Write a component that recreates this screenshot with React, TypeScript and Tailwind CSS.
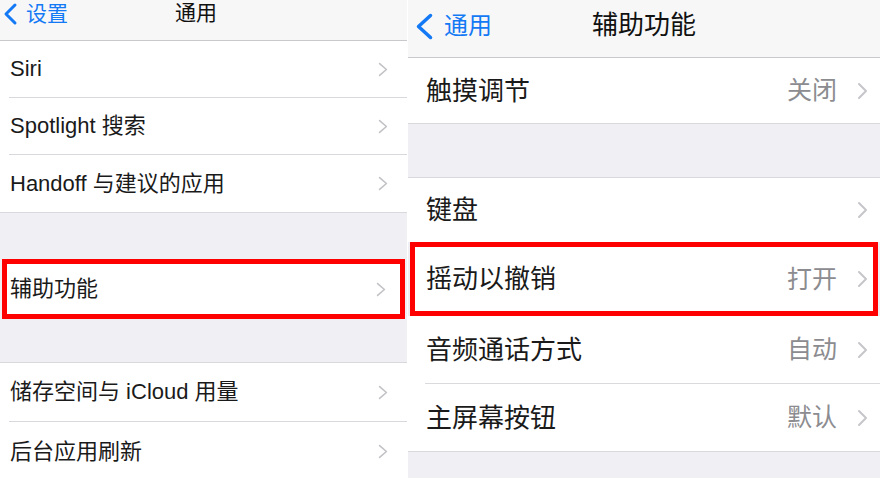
import React from "react";

const FONT = "font-['Liberation_Sans','Noto_Sans_CJK_SC',sans-serif]";

function Chevron({ w, h, sw, color }: { w: number; h: number; sw: number; color: string }) {
  return (
    <svg width={w} height={h} viewBox={`0 0 ${w} ${h}`} fill="none">
      <polyline
        points={`${sw},${sw} ${w - sw},${h / 2} ${sw},${h - sw}`}
        stroke={color}
        strokeWidth={sw}
        strokeLinecap="round"
        strokeLinejoin="round"
      />
    </svg>
  );
}

function BackChevron({ w, h, sw }: { w: number; h: number; sw: number }) {
  return (
    <svg width={w} height={h} viewBox={`0 0 ${w} ${h}`} fill="none">
      <polyline
        points={`${w - sw},${sw} ${sw},${h / 2} ${w - sw},${h - sw}`}
        stroke="#1479f5"
        strokeWidth={sw}
        strokeLinecap="round"
        strokeLinejoin="round"
      />
    </svg>
  );
}

function LRow({ label, sep = true, h = "h-[57px]" }: { label: string; sep?: boolean; h?: string }) {
  return (
    <div className="shrink-0 bg-white pl-[9px]">
      <div
        className={`flex ${h} items-center justify-between pl-[1px] pr-[19px] ${
          sep ? "border-b border-[#d9d9dd]" : ""
        }`}
      >
        <span className="text-[22px] leading-none text-[#1a1a1a]">{label}</span>
        <Chevron w={10} h={15} sw={1.6} color="#c2c2c6" />
      </div>
    </div>
  );
}

function RRow({ label, value, h, sep = true }: { label: string; value?: string; h: string; sep?: boolean }) {
  return (
    <div className="shrink-0 bg-white pl-[17px]">
      <div className={`flex ${h} items-center justify-between pl-[1px] pr-[12px] ${sep ? "border-b border-[#dadade]" : ""}`}>
        <span className="text-[26px] leading-none text-[#1a1a1a]">{label}</span>
        <div className="flex items-center gap-[20px]">
          {value && <span className="text-[25px] leading-none text-[#8c8c90]">{value}</span>}
          <Chevron w={11} h={18} sw={2} color="#c6c6ca" />
        </div>
      </div>
    </div>
  );
}

export default function App() {
  return (
    <div className={`flex h-[478px] w-[885px] overflow-hidden bg-white ${FONT}`}>
      {/* Left panel */}
      <div className="flex w-[407px] flex-col overflow-hidden bg-[#efeff4] [&>*]:shrink-0">
        <div className="flex h-[41px] items-start border-b border-[#c9c9cd] bg-[#f7f7f7]">
          <div className="mt-[2px] ml-[3px] flex items-start gap-[8px]">
            <BackChevron w={15} h={24} sw={3} />
            <span className="text-[21px] leading-[24px] text-[#1479f5]">设置</span>
          </div>
          <span className="ml-[107px] mt-[1px] text-[21px] leading-[24px] text-[#111]">通用</span>
        </div>
        <LRow label="Siri" />
        <LRow label="Spotlight 搜索" />
        <div className="border-b border-[#d9d9dd]">
          <LRow label="Handoff 与建议的应用" sep={false} />
        </div>
        <div className="h-[46px]" />
        <div className="mx-[2px] flex h-[60px] items-center justify-between border-[5px] border-[#ff0000] bg-white pl-[3px] pr-[14px]">
          <span className="text-[22px] leading-none text-[#1a1a1a]">辅助功能</span>
          <Chevron w={10} h={15} sw={1.6} color="#c2c2c6" />
        </div>
        <div className="h-[44px] border-b border-[#d9d9dd]" />
        <LRow label="储存空间与 iCloud 用量" h="h-[59px]" />
        <LRow label="后台应用刷新" sep={false} h="h-[59px]" />
      </div>

      <div className="w-[1px]" />

      {/* Right panel */}
      <div className="flex w-[472px] flex-col overflow-hidden bg-[#efeff4] [&>*]:shrink-0">
        <div className="flex h-[58px] items-start border-b border-[#c9c9cd] bg-[#f7f7f7]">
          <div className="mt-[12px] ml-[7px] flex items-start gap-[10px]">
            <BackChevron w={19} h={29} sw={3.5} />
            <span className="mt-[1px] text-[24px] leading-[26px] text-[#1479f5]">通用</span>
          </div>
          <span className="ml-[100px] mt-[11px] text-[26px] leading-[28px] text-[#111]">辅助功能</span>
        </div>
        <div className="border-b border-[#d9d9dd]">
          <RRow label="触摸调节" value="关闭" h="h-[65px]" sep={false} />
        </div>
        <div className="h-[54px] border-b border-[#d9d9dd]" />
        <RRow label="键盘" h="h-[64px]" sep={false} />
        <div className="mx-[2px] flex h-[74px] items-center justify-between border-[5px] border-[#ff0000] bg-white pl-[11px] pr-[5px]">
          <span className="text-[26px] leading-none text-[#1a1a1a]">摇动以撤销</span>
          <div className="flex items-center gap-[20px]">
            <span className="text-[25px] leading-none text-[#8c8c90]">打开</span>
            <Chevron w={11} h={18} sw={2} color="#c6c6ca" />
          </div>
        </div>
        <RRow label="音频通话方式" value="自动" h="h-[68px]" />
        <div className="border-b border-[#d9d9dd]">
          <RRow label="主屏幕按钮" value="默认" h="h-[67px]" sep={false} />
        </div>
      </div>
    </div>
  );
}
